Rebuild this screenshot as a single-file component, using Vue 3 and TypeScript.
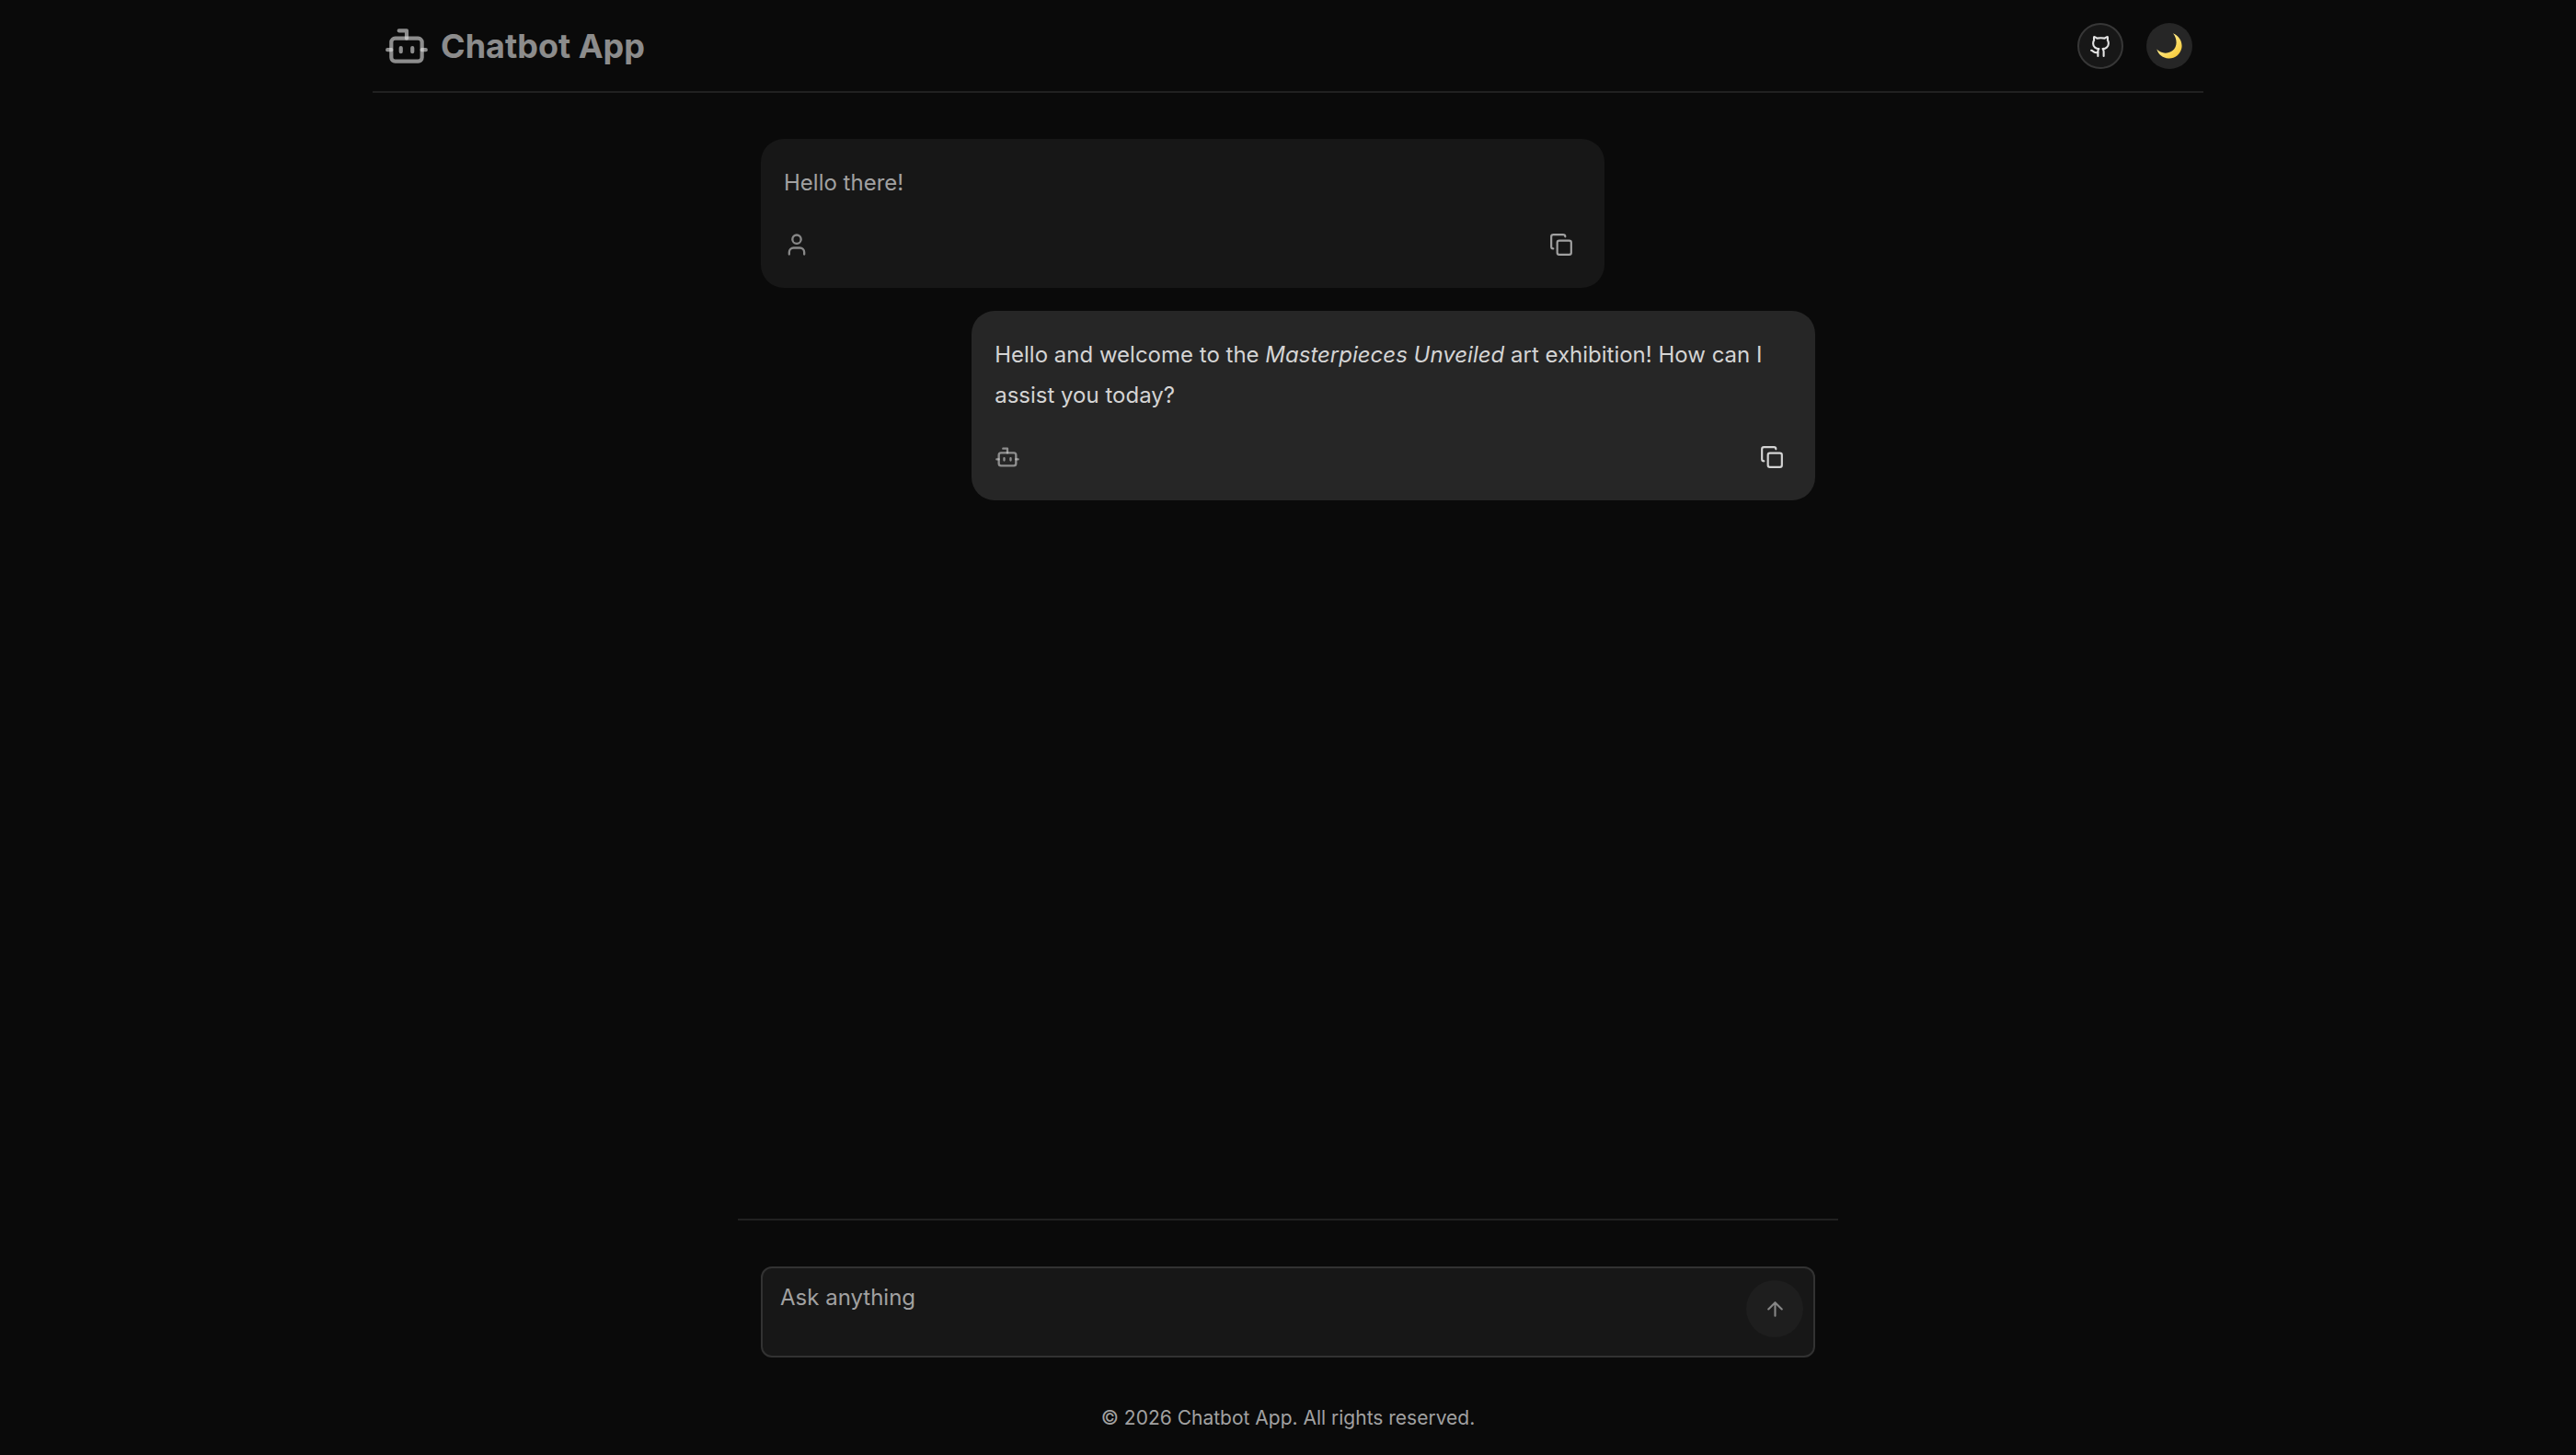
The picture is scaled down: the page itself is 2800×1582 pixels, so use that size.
<script setup lang="ts">
import { ref } from 'vue'

interface Part {
  text: string
  emphasis?: boolean
}

interface Message {
  id: number
  role: 'user' | 'assistant'
  parts: Part[]
}

const draft = ref('')

const messages = ref<Message[]>([
  { id: 1, role: 'user', parts: [{ text: 'Hello there!' }] },
  {
    id: 2,
    role: 'assistant',
    parts: [
      { text: 'Hello and welcome to the ' },
      { text: 'Masterpieces Unveiled', emphasis: true },
      { text: ' art exhibition! How can I assist you today?' },
    ],
  },
])

function copy(message: Message) {
  navigator.clipboard?.writeText(message.parts.map((part) => part.text).join(''))
}
</script>

<template>
  <div class="page">
    <header class="header">
      <h1 class="brand">
        <svg class="brand-icon icon" viewBox="0 0 24 24" aria-hidden="true">
          <path d="M12 8V4H8" />
          <rect x="4" y="8" width="16" height="12" rx="2" />
          <path d="M2 14h2M20 14h2M15 13v2M9 13v2" />
        </svg>
        <span>Chatbot App</span>
      </h1>
      <nav class="actions">
        <a class="round outlined" href="#" aria-label="GitHub repository">
          <svg class="icon icon-github" viewBox="0 0 24 24" aria-hidden="true">
            <path d="M15 22v-4a4.8 4.8 0 0 0-1-3.500c3 0 6-2 6-5.500.080-1.250-.270-2.480-1-3.500.280-1.150.280-2.350 0-3.500 0 0-1 0-3 1.500-2.640-.500-5.360-.500-8 0C6 2 5 2 5 2c-.300 1.150-.300 2.350 0 3.500A5.403 5.403 0 0 0 4 9c0 3.500 3 5.500 6 5.500-.390.490-.680 1.050-.850 1.650-.170.600-.220 1.230-.150 1.850v4" />
            <path d="M9 18c-4.510 2-5-2-7-2" />
          </svg>
        </a>
        <button class="round filled" type="button" aria-label="Toggle theme">
          <svg class="moon" viewBox="0 0 28 28" aria-hidden="true">
            <defs>
              <linearGradient id="moon-fill" x1="0" y1="0" x2="1" y2="1">
                <stop offset="0.400" stop-color="#ffe680" />
                <stop offset="0.800" stop-color="#f8cf45" />
                <stop offset="1" stop-color="#dda63a" />
              </linearGradient>
            </defs>
            <path fill="url(#moon-fill)" d="M18 .300C24.500 3 28.500 9.500 27.400 16C26 23.500 19.500 28 13 27.500C7 27.200 2 23.500.300 17.600C5 22.500 12 22.800 17.200 19.200C23 15 22.800 6.500 18 .300Z" />
          </svg>
        </button>
      </nav>
    </header>

    <main class="chat">
      <ul class="messages">
        <li v-for="message in messages" :key="message.id" class="message" :class="message.role">
          <p class="text">
            <template v-for="(part, index) in message.parts" :key="index">
              <em v-if="part.emphasis">{{ part.text }}</em>
              <template v-else>{{ part.text }}</template>
            </template>
          </p>
          <div class="meta">
            <svg v-if="message.role === 'user'" class="icon avatar" viewBox="0 0 24 24" role="img" aria-label="You">
              <circle cx="12" cy="7" r="4" />
              <path d="M19 21v-2a4 4 0 0 0-4-4H9a4 4 0 0 0-4 4v2" />
            </svg>
            <svg v-else class="icon avatar" viewBox="0 0 24 24" role="img" aria-label="Chatbot">
              <path d="M12 8V4H8" />
              <rect x="4" y="8" width="16" height="12" rx="2" />
              <path d="M2 14h2M20 14h2M15 13v2M9 13v2" />
            </svg>
            <button class="copy" type="button" aria-label="Copy message" @click="copy(message)">
              <svg class="icon icon-copy" viewBox="0 0 24 24" aria-hidden="true">
                <rect x="8" y="8" width="14" height="14" rx="2" />
                <path d="M4 16c-1.100 0-2-.900-2-2V4c0-1.100.900-2 2-2h10c1.100 0 2 .900 2 2" />
              </svg>
            </button>
          </div>
        </li>
      </ul>

      <form class="composer" @submit.prevent>
        <div class="field">
          <textarea v-model="draft" class="input" placeholder="Ask anything" aria-label="Ask anything" />
          <button class="send" type="submit" aria-label="Send" :disabled="!draft">
            <svg class="icon icon-send" viewBox="0 0 24 24" aria-hidden="true">
              <path d="m5 12 7-7 7 7M12 19V5" />
            </svg>
          </button>
        </div>
      </form>
    </main>

    <footer class="footer">© 2026 Chatbot App. All rights reserved.</footer>
  </div>
</template>

<style>
body {
  margin: 0;
  background: #0a0a0a;
}
</style>

<style scoped>
.page {
  display: flex;
  flex-direction: column;
  align-items: center;
  box-sizing: border-box;
  min-height: 100vh;
  background: #0a0a0a;
  color: #d4d4d4;
  font-family: Inter, 'Liberation Sans', sans-serif;
  font-size: 24px;
}

.icon {
  display: block;
  fill: none;
  stroke: currentColor;
  stroke-width: 2;
  stroke-linecap: round;
  stroke-linejoin: round;
}

button {
  padding: 0;
  border: 0;
  background: none;
  color: inherit;
  font: inherit;
  cursor: pointer;
}

.header {
  display: flex;
  align-items: center;
  justify-content: space-between;
  box-sizing: border-box;
  width: 100%;
  max-width: 1990px;
  padding: 25px 12px 24px;
  border-bottom: 2px solid #212121;
}

.brand {
  display: flex;
  align-items: center;
  gap: 12px;
  margin: 0;
  color: rgba(229, 229, 229, 0.6);
  font-size: 36px;
  font-weight: 700;
  line-height: 50px;
}

.brand-icon {
  width: 50px;
  height: 50px;
}

.actions {
  display: flex;
  gap: 25px;
}

.round {
  display: flex;
  align-items: center;
  justify-content: center;
  box-sizing: border-box;
  width: 50px;
  height: 50px;
  border-radius: 50%;
}

.outlined {
  border: 2px solid #373737;
  background: #171717;
  color: #e5e5e5;
}

.filled {
  background: #262626;
}

.icon-github {
  width: 25px;
  height: 25px;
}

.moon {
  width: 28px;
  height: 28px;
}

.chat {
  display: flex;
  flex: 1;
  flex-direction: column;
  width: 100%;
  max-width: 1196px;
}

.messages {
  display: flex;
  flex: 1;
  flex-direction: column;
  gap: 25px;
  margin: 0;
  padding: 50px 25px;
  list-style: none;
}

.message {
  box-sizing: border-box;
  width: 80%;
  padding: 26px 25px 19px;
  border-radius: 25px;
}

.user {
  align-self: flex-start;
  background: #171717;
  color: #a1a1a1;
}

.assistant {
  align-self: flex-end;
  background: #262626;
}

.text {
  margin: 0;
  line-height: 44px;
}

.meta {
  display: flex;
  align-items: center;
  justify-content: space-between;
  margin-top: 17px;
  padding-right: 9px;
}

.avatar {
  width: 28px;
  height: 28px;
  color: rgba(212, 212, 212, 0.6);
}

.copy {
  padding: 15px 0;
}

.icon-copy {
  width: 26px;
  height: 26px;
}

.composer {
  padding: 50px 25px;
  border-top: 2px solid #212121;
}

.field {
  display: flex;
  align-items: flex-start;
  box-sizing: border-box;
  height: 99px;
  padding: 13px 11px 0 19px;
  border: 2px solid #323232;
  border-radius: 12px;
  background: #171717;
}

.input {
  flex: 1;
  height: 70px;
  padding: 0;
  border: 0;
  outline: 0;
  background: none;
  color: #d4d4d4;
  font: inherit;
  line-height: 38px;
  resize: none;
}

.input::placeholder {
  color: #a1a1a1;
  opacity: 1;
}

.send {
  display: flex;
  align-items: center;
  justify-content: center;
  width: 62px;
  height: 62px;
  border-radius: 50%;
  background: #1e1e1e;
  color: #868686;
}

.icon-send {
  width: 25px;
  height: 25px;
}

.footer {
  padding: 0 25px 24px;
  color: #a1a1a1;
  font-size: 21px;
  line-height: 32px;
}
</style>
